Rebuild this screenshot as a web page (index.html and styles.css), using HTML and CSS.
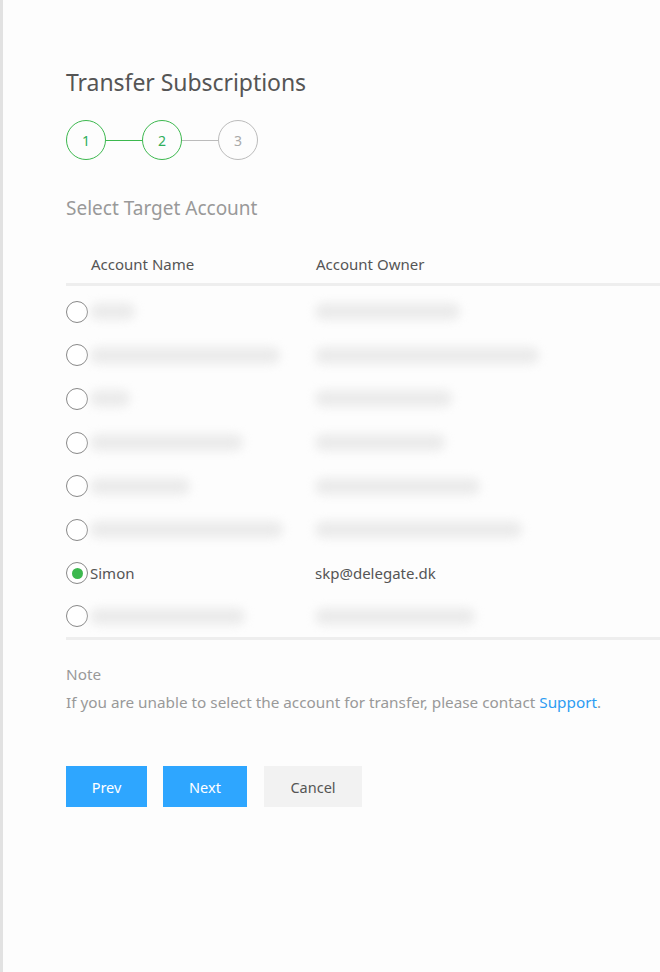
FILE: index.html
```html
<!DOCTYPE html>
<html>
<head>
<meta charset="utf-8">
<link rel="stylesheet" href="styles.css">
</head>
<body>
<div class="page">
  <div class="content">
    <h1 class="title">Transfer Subscriptions</h1>
    <div class="steps">
      <div class="step done">1</div>
      <div class="link done"></div>
      <div class="step done">2</div>
      <div class="link"></div>
      <div class="step">3</div>
    </div>
    <h2 class="subtitle">Select Target Account</h2>
    <div class="table">
      <div class="thead">
        <div class="c-name">Account Name</div>
        <div class="c-owner">Account Owner</div>
      </div>
      <div class="tbody">
        <div class="row"><span class="radio"></span><div class="c-name"><span class="blur" style="width:45px"></span></div><div class="c-owner"><span class="blur" style="width:145px"></span></div></div>
        <div class="row"><span class="radio"></span><div class="c-name"><span class="blur" style="width:190px"></span></div><div class="c-owner"><span class="blur" style="width:224px"></span></div></div>
        <div class="row"><span class="radio"></span><div class="c-name"><span class="blur" style="width:40px"></span></div><div class="c-owner"><span class="blur" style="width:137px"></span></div></div>
        <div class="row"><span class="radio"></span><div class="c-name"><span class="blur" style="width:153px"></span></div><div class="c-owner"><span class="blur" style="width:130px"></span></div></div>
        <div class="row"><span class="radio"></span><div class="c-name"><span class="blur" style="width:100px"></span></div><div class="c-owner"><span class="blur" style="width:165px"></span></div></div>
        <div class="row"><span class="radio"></span><div class="c-name"><span class="blur" style="width:193px"></span></div><div class="c-owner"><span class="blur" style="width:207px"></span></div></div>
        <div class="row"><span class="radio checked"></span><div class="c-name">Simon</div><div class="c-owner">skp@delegate.dk</div></div>
        <div class="row"><span class="radio"></span><div class="c-name"><span class="blur" style="width:155px"></span></div><div class="c-owner"><span class="blur" style="width:160px"></span></div></div>
      </div>
    </div>
    <div class="note">
      <div class="note-title">Note</div>
      <div class="note-text">If you are unable to select the account for transfer, please contact <a class="link-support">Support</a>.</div>
    </div>
    <div class="actions">
      <button class="btn primary prev">Prev</button>
      <button class="btn primary next">Next</button>
      <button class="btn secondary cancel">Cancel</button>
    </div>
  </div>
</div>
</body>
</html>
```

FILE: styles.css
```css
html, body {
  margin: 0;
  padding: 0;
  background: #fdfdfd;
}
body {
  font-family: "Noto Sans", "Open Sans", sans-serif;
  color: #555;
  overflow: hidden;
}
.page {
  border-left: 3px solid #e2e2e2;
  min-height: 972px;
  box-sizing: border-box;
}
.content {
  padding: 65px 0 0 63px;
}
.title {
  margin: 0;
  font-size: 23px;
  font-weight: 400;
  line-height: 34px;
  color: #555;
  letter-spacing: -0.05px;
}
.steps {
  display: flex;
  align-items: center;
  margin-top: 21px;
}
.step {
  width: 38px;
  height: 38px;
  border: 1px solid #bbb;
  border-radius: 50%;
  display: flex;
  align-items: center;
  justify-content: center;
  font-size: 14px;
  color: #aaa;
}
.step.done {
  border-color: #3cb84e;
  color: #2fae5a;
}
.link {
  width: 36px;
  height: 1px;
  background: #bbb;
}
.link.done {
  background: #3cb84e;
}
.subtitle {
  margin: 35px 0 0;
  font-size: 19px;
  font-weight: 400;
  color: #999;
  line-height: 26px;
}
.table {
  margin-top: 33px;
}
.thead {
  display: flex;
  height: 32px;
  align-items: flex-start;
  font-size: 15px;
  color: #555;
  border-bottom: 3px solid #eeeeee;
  box-sizing: border-box;
}
.thead .c-name {
  width: 225px;
  padding-left: 25px;
  line-height: 20px;
}
.thead .c-owner {
  line-height: 20px;
}
.tbody {
  padding-top: 4px;
  border-bottom: 3px solid #eeeeee;
}
.row {
  display: flex;
  align-items: center;
  height: 43.6px;
  font-size: 15px;
  color: #555;
}
.row:last-child {
  height: 42px;
}
.radio {
  width: 22px;
  height: 22px;
  border: 1px solid #888;
  border-radius: 50%;
  box-sizing: border-box;
  display: flex;
  align-items: center;
  justify-content: center;
  flex: none;
  background: #fff;
}
.radio.checked::after {
  content: "";
  width: 11px;
  height: 11px;
  border-radius: 50%;
  background: #3cb84e;
}
.row .c-name {
  width: 225px;
  padding-left: 2px;
  display: flex;
  align-items: center;
}
.row .c-owner {
  display: flex;
  align-items: center;
}
.blur {
  display: inline-block;
  height: 17px;
  background: #ebebeb;
  border-radius: 9px;
  filter: blur(5px);
}
.note {
  margin-top: 23px;
  font-size: 15.3px;
  color: #999;
}
.note-title {
  line-height: 22px;
}
.note-text {
  margin-top: 6px;
  line-height: 22px;
}
.link-support {
  color: #2d9cf2;
}
.actions {
  display: flex;
  margin-top: 53px;
}
.btn {
  height: 41px;
  border: none;
  font-family: inherit;
  font-size: 14.5px;
  padding: 0;
  margin-right: 16px;
}
.primary {
  background: #2ea6ff;
  color: #fff;
}
.secondary {
  background: #f2f2f2;
  color: #555;
}
.prev { width: 81px; }
.next { width: 84px; margin-right: 17px; }
.cancel { width: 98px; }
```
